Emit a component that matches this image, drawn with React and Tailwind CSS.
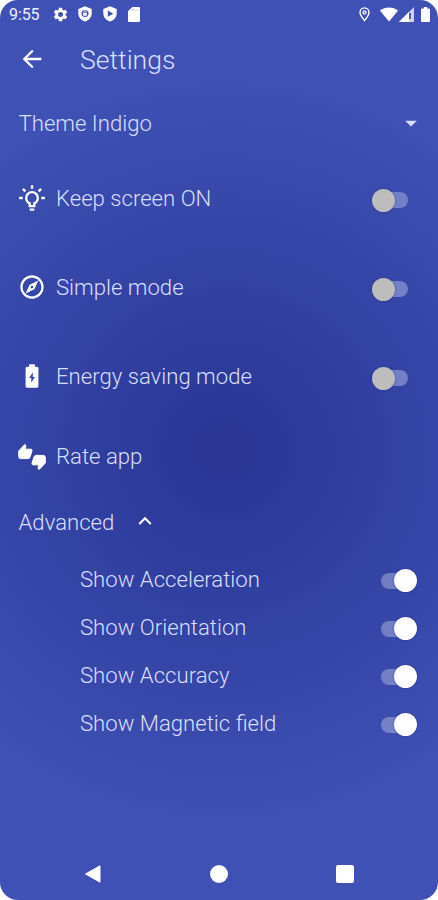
import clsx from 'clsx';
import { MdArrowBack, MdArrowDropDown, MdExpandLess, MdOutlineExplore, MdSettings } from 'react-icons/md';

const BulbIcon = () => (
  <svg viewBox="0 0 24 24" className="size-7" fill="currentColor">
    <path d="M20,11H23V13H20V11M1,11H4V13H1V11M13,1V4H11V1H13M4.92,3.5L7.05,5.64L5.63,7.05L3.5,4.93L4.92,3.5M16.95,5.63L19.07,3.5L20.5,4.93L18.37,7.05L16.95,5.63M12,6A6,6 0 0,1 18,12C18,14.22 16.79,16.16 15,17.2V19A1,1 0 0,1 14,20H10A1,1 0 0,1 9,19V17.2C7.21,16.16 6,14.22 6,12A6,6 0 0,1 12,6M14,21V22A1,1 0 0,1 13,23H11A1,1 0 0,1 10,22V21H14M11,18H13V15.87C14.73,15.43 16,13.86 16,12A4,4 0 0,0 12,8A4,4 0 0,0 8,12C8,13.86 9.27,15.43 11,15.87V18Z" />
  </svg>
);

const BatteryIcon = () => (
  <svg viewBox="0 0 24 24" className="size-7" fill="currentColor">
    <path
      fillRule="evenodd"
      d="M9.5 2H14.5V4H16.2A1.3 1.3 0 0 1 17.5 5.3V20.7A1.3 1.3 0 0 1 16.2 22H7.8A1.3 1.3 0 0 1 6.5 20.7V5.3A1.3 1.3 0 0 1 7.8 4H9.5ZM12.7 9L9.5 13.8H11.4V17.6L14.5 12.8H12.7Z"
    />
  </svg>
);

const ThumbsIcon = () => (
  <svg viewBox="0 0 28 28" className="size-7 text-white" fill="currentColor" stroke="currentColor" strokeLinejoin="round">
    <path d="M0.7 8L6.8 1.5L8 2.6L7.3 6.2H13.2Q14.2 6.4 14 7.8L12 14Q11.6 15.6 10.2 15.6H2.6Q0.7 15.6 0.7 13.6Z" />
    <path d="M27.3 20L21.2 26.5L20 25.4L20.7 21.8H14.8Q13.8 21.6 14 20.2L16 14Q16.4 12.4 17.8 12.4H25.4Q27.3 12.4 27.3 14.4Z" />
  </svg>
);

const ShieldIcon = ({ children }) => (
  <svg viewBox="0 0 14 16" className="h-4 w-3.5" fill="white">
    <path d="M7 0.3L13.7 2.9V7.6C13.7 11.3 10.9 14.4 7 15.5C3.1 14.4 0.3 11.3 0.3 7.6V2.9Z" />
    {children}
  </svg>
);

const StatusBar = () => (
  <div className="h-7 flex items-center justify-between pl-[9px] pr-2 text-white">
    <div className="flex items-center">
      <span className="w-[43px] pt-px text-[16px] font-normal tracking-[-0.1px] text-[#eceffd]">9:55</span>
      <MdSettings className="size-[17px] mr-[9px]" />
      <ShieldIcon>
        <circle cx="7" cy="7.6" r="3.5" fill="#3f51b5" />
        <path d="M5.2 7H8.8V9.8H5.2Z" />
        <path d="M5.9 7V6A1.1 1.1 0 0 1 8.1 6V7" fill="none" stroke="white" strokeWidth="0.8" />
      </ShieldIcon>
      <span className="w-[11px]" />
      <ShieldIcon>
        <path d="M4.8 4.6L10.2 7.7L4.8 10.8Z" fill="#3f51b5" />
      </ShieldIcon>
      <svg viewBox="0 0 12 15" className="ml-[11px] h-[15px] w-3" fill="white">
        <path d="M4.3 0H10.8Q12 0 12 1.2V13.8Q12 15 10.8 15H1.2Q0 15 0 13.8V4.3Z" />
        <path d="M4.4 2V4M6.8 2V4M9.2 2V4" stroke="#c3caee" strokeWidth="1" />
      </svg>
    </div>
    <div className="flex items-center">
      <svg viewBox="0 0 11 15" className="h-[15px] w-[11px] mr-[10px]" fill="none" stroke="white">
        <path d="M5.5 13.6C3.4 10.8 1 8 1 5.4A4.5 4.5 0 0 1 10 5.4C10 8 7.6 10.8 5.5 13.6Z" strokeWidth="1.4" />
        <circle cx="5.5" cy="5.4" r="1.5" strokeWidth="1.3" />
      </svg>
      <svg viewBox="0 0 18 15" className="h-[15px] w-[18px] mr-px" fill="white">
        <path d="M0 3.7C5 -0.6 13 -0.6 18 3.7L9 14.5Z" />
      </svg>
      <svg viewBox="0 0 15 15" className="h-[15px] w-[15px] mr-[7px]" fill="white">
        <path d="M0 15L15 0V15Z" fillOpacity="0.75" />
        <path d="M0 15L10 5V15Z" />
        <path d="M11 6V12" stroke="#3040a0" strokeWidth="1.6" />
      </svg>
      <svg viewBox="0 0 9 15" className="h-[15px] w-[9px]" fill="white">
        <path d="M2.8 0H6.2V1.4H8Q9 1.4 9 2.4V14Q9 15 8 15H1Q0 15 0 14V2.4Q0 1.4 1 1.4H2.8Z" />
      </svg>
    </div>
  </div>
);

const Switch = ({ on }) => (
  <span
    className={clsx(
      'flex h-4 w-[35px] items-center rounded-full',
      on ? 'justify-end bg-white/30' : 'bg-[#7986cb]/90'
    )}
  >
    <span
      className={clsx(
        'size-[23px] shrink-0 rounded-full shadow-[0_0_2px_rgba(20,30,110,0.6)]',
        on ? '-mr-px bg-[#fdfdfd]' : '-ml-px bg-[#bdbdbd]'
      )}
    />
  </span>
);

const modes = [
  { label: 'Keep screen ON', icon: <BulbIcon /> },
  { label: 'Simple mode', icon: <MdOutlineExplore className="size-7" /> },
  { label: 'Energy saving mode', icon: <BatteryIcon /> },
];

const advanced = ['Show Acceleration', 'Show Orientation', 'Show Accuracy', 'Show Magnetic field'];

const App = () => {
  return (
    <div className="h-[900px] w-[438px] bg-white">
      <div className="flex h-full flex-col overflow-hidden rounded-[18px] bg-[radial-gradient(circle_375px_at_225px_450px,#283593,#3f51b5)] font-['Roboto',sans-serif] text-[22.15px] font-light text-[#d9dffb]">
        <StatusBar />

        <header className="flex h-16 items-center pb-0.5 pl-[18px]">
          <MdArrowBack className="size-7 text-white" />
          <h1 className="ml-[34px] pt-0.5 text-[26.6px]">Settings</h1>
        </header>

        <div className="flex h-[62px] items-center justify-between pl-[18.5px] pr-[13px]">
          <span className="pt-px">Theme Indigo</span>
          <MdArrowDropDown className="size-7" />
        </div>

        {modes.map((mode) => (
          <div key={mode.label} className="flex h-[89px] items-center pl-[18px] pr-[30px]">
            <span className="pb-0.5 text-white">{mode.icon}</span>
            <span className="ml-2.5 grow">{mode.label}</span>
            <span className="pt-[3px]">
              <Switch />
            </span>
          </div>
        ))}

        <div className="flex h-[72px] items-center pb-px pl-[18px]">
          <ThumbsIcon />
          <span className="ml-2.5 pt-px">Rate app</span>
        </div>

        <div className="flex h-[60px] items-center pb-px pl-[18.5px]">
          <span>Advanced</span>
          <MdExpandLess className="mb-[3px] ml-[18px] size-[26px] text-white" />
        </div>

        <div className="flex grow flex-col pt-[3px]">
          {advanced.map((label) => (
            <div key={label} className="flex h-12 items-center justify-between pl-[80px] pr-[22px]">
              <span className="pb-px">{label}</span>
              <span className="pt-px">
                <Switch on />
              </span>
            </div>
          ))}
        </div>

        <nav className="flex h-[52px] items-center justify-between pl-[84px] pr-[84px]">
          <svg viewBox="0 0 17 18" className="h-[18px] w-[17px]" fill="white">
            <path d="M16 0.8V17.2L1.5 9Z" stroke="white" strokeLinejoin="round" />
          </svg>
          <span className="size-[18px] rounded-full bg-white" />
          <span className="size-[18px] rounded-xs bg-white" />
        </nav>
      </div>
    </div>
  );
};

export default App;
